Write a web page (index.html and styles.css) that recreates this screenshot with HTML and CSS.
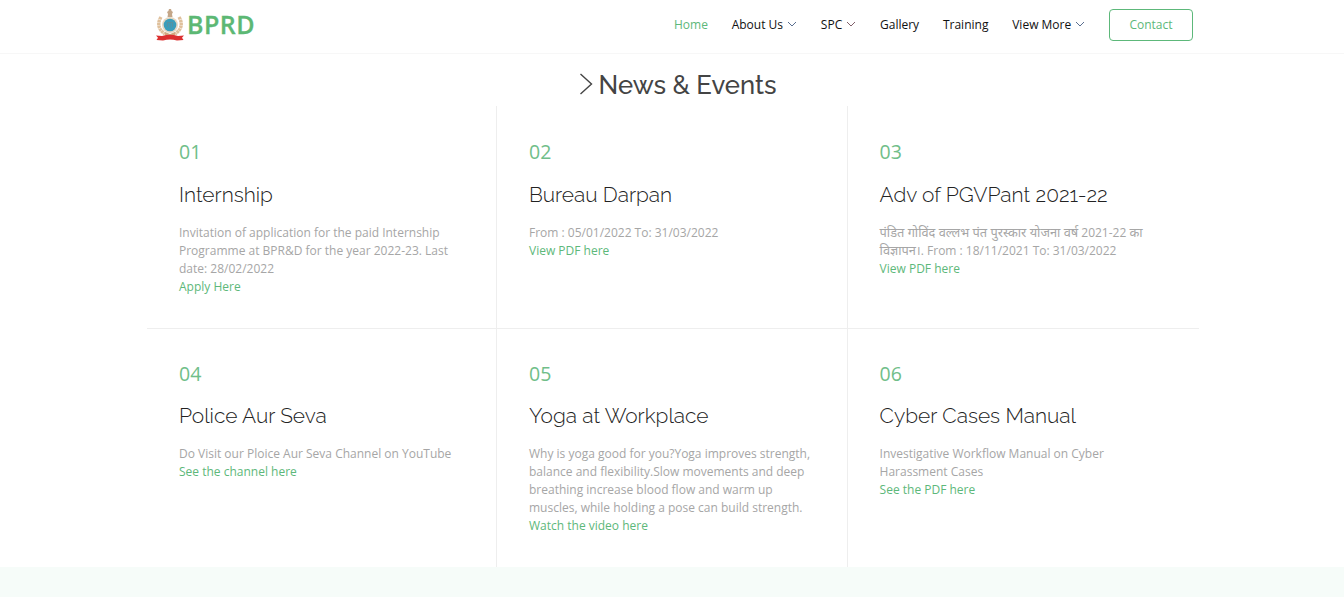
FILE: index.html
```
<!DOCTYPE html>
<html lang="en">
<head>
<meta charset="utf-8">
<title>BPRD</title>
<link rel="stylesheet" href="styles.css">
</head>
<body>
<header class="header">
  <div class="bar">
    <a class="brand">
      <svg class="emblem" viewBox="0 0 30 34" width="30" height="34">
        <path d="M14 1h2l.6 2 1.400 1-1 2 .5 3h-5l.5-3-1-2 1.400-1z" fill="#c4a688"/>
        <path d="M6 9q-6 10 4 17M24 9q6 10-4 17" fill="none" stroke="#dfc09c" stroke-width="3.400" stroke-dasharray="2.600 .4"/>
        <circle cx="15" cy="17" r="8" fill="#e6d8c3"/>
        <circle cx="15" cy="17" r="6.300" fill="#3a9dbb"/>
        <path d="M12 14.500h6M12.500 15v4M15 14v6M17.500 15v4" stroke="#5d8f9c" stroke-width=".8" fill="none"/>
        <path d="M10 24l5 2 5-2v3H10z" fill="#d3a780"/>
        <path d="M1 27.500l6 .5q8-2.500 16 0l6-.5-2 2.300 1.500 2.200-6.500.5q-7-2-14 0L1.500 32 3 29.800z" fill="#dc3030"/>
      </svg>
      <span class="name">BPRD</span>
    </a>
    <nav class="nav">
      <a class="active">Home</a>
      <a>About Us<svg class="chev" viewBox="0 0 10 6"><path d="M1 1l4 4 4-4"/></svg></a>
      <a>SPC<svg class="chev red" viewBox="0 0 10 6"><path d="M1 1l4 4 4-4"/></svg></a>
      <a>Gallery</a>
      <a>Training</a>
      <a>View More<svg class="chev" viewBox="0 0 10 6"><path d="M1 1l4 4 4-4"/></svg></a>
      <a class="contact">Contact</a>
    </nav>
  </div>
</header>
<main>
  <h2 class="title"><svg viewBox="0 0 14 22" width="14" height="22"><path d="M1.500 1l11 10-11 10"/></svg>News &amp; Events</h2>
  <section class="grid">
    <article><span class="num">01</span><h4>Internship</h4><p>Invitation of application for the paid Internship Programme at BPR&amp;D for the year 2022-23. Last date: 28/02/2022<br><a>Apply Here</a></p></article>
    <article><span class="num">02</span><h4>Bureau Darpan</h4><p>From : 05/01/2022 To: 31/03/2022<br><a>View PDF here</a></p></article>
    <article><span class="num">03</span><h4>Adv of PGVPant 2021-22</h4><p><span class="hindi" lang="hi">पंडित गोविंद वल्लभ पंत पुरस्कार योजना वर्ष</span> 2021-22 <span class="hindi" lang="hi">का</span><br><span class="hindi" lang="hi">विज्ञापन।</span>. From : 18/11/2021 To: 31/03/2022<br><a>View PDF here</a></p></article>
    <article><span class="num">04</span><h4>Police Aur Seva</h4><p>Do Visit our Ploice Aur Seva Channel on YouTube<br><a>See the channel here</a></p></article>
    <article><span class="num">05</span><h4>Yoga at Workplace</h4><p>Why is yoga good for you?Yoga improves strength, balance and flexibility.Slow movements and deep breathing increase blood flow and warm up muscles, while holding a pose can build strength.<br><a>Watch the video here</a></p></article>
    <article><span class="num">06</span><h4>Cyber Cases Manual</h4><p>Investigative Workflow Manual on Cyber Harassment Cases<br><a>See the PDF here</a></p></article>
  </section>
</main>
</body>
</html>
```
FILE: styles.css
```
* { box-sizing: border-box; }
body { margin: 0; min-height: 597px; background: #f6fcf9; font-family: "Open Sans", "Noto Sans", sans-serif; font-size: 12px; line-height: 18px; color: #a6a6a6; }
.header { height: 54px; background: #fff; border-bottom: 1px solid #f7f7f7; }
.bar { width: 1042px; margin: 0 auto; padding-left: 4px; height: 50px; display: flex; align-items: center; justify-content: space-between; }
.brand { display: flex; align-items: center; gap: 2px; }
.name { font: 600 25px/30px "Open Sans", sans-serif; color: #5cb874; -webkit-text-stroke: .3px #5cb874; letter-spacing: .5px; margin-top: -2px; }
.nav { display: flex; align-items: center; gap: 23.8px; color: #111; }
.nav a { display: flex; align-items: center; white-space: nowrap; }
.nav .active, .nav .contact { color: #5db87a; }
.chev { width: 10px; height: 6px; margin: -2px 0 0 4px; fill: none; stroke: #5a6f90; stroke-width: 1; }
.chev.red { stroke: #80606a; }
.contact { width: 84px; height: 32px; justify-content: center; border: 1px solid #5db87a; border-radius: 4px; }
main { background: #fff; height: 513px; }
.title { margin: 0; height: 52px; padding: 10px 0 0 11px; display: flex; justify-content: center; align-items: center; gap: 6px; font: 500 25.6px/40px Raleway, Lato, sans-serif; color: #444; }
.title svg { fill: none; stroke: #444; stroke-width: 1.4; margin-top: -2px; }
.grid { width: 1054px; margin: 0 auto; padding-left: 2px; display: grid; grid-template-columns: 350px 350.6px 351.4px; grid-template-rows: 223px 238px; }
article { padding: 33px 32px 0; border-right: 1px solid #eee; }
article:nth-child(3n) { border-right: 0; }
article:nth-child(-n+3) { padding-top: 34px; border-bottom: 1px solid #eee; }
.num { display: block; font-size: 19.5px; line-height: 24px; color: #70be89; }
h4 { margin: 15px 0 14px; font: 300 20.9px/30px Raleway, Lato, sans-serif; color: #222; }
article:nth-child(-n+3) h4 { margin-top: 16px; }
p { margin: 0; }
p a { color: #5db87a; }
.hindi { font-size: 12.8px; line-height: 1; }
```
